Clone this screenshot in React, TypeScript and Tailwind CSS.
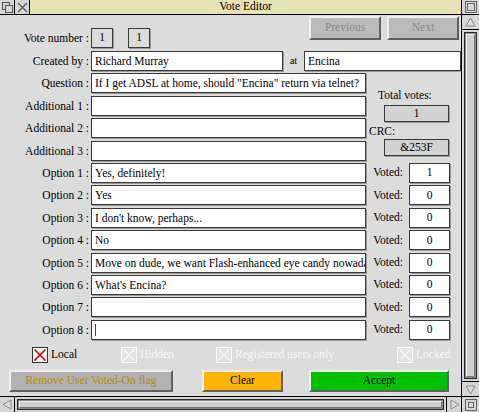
// Vote Editor — RISC OS style window with the poll form.
const FONT = "[font-family:'Liberation_Serif','Times_New_Roman',serif]"

const OPTIONS = [
  { text: 'Yes, definitely!', voted: 1 },
  { text: 'Yes', voted: 0 },
  { text: "I don't know, perhaps...", voted: 0 },
  { text: 'No', voted: 0 },
  { text: 'Move on dude, we want Flash-enhanced eye candy nowadays', voted: 0 },
  { text: "What's Encina?", voted: 0 },
  { text: '', voted: 0 },
  { text: '', voted: 0 },
]

function Label({ children }: { children: React.ReactNode }) {
  return <div className="w-[89px] shrink-0 whitespace-nowrap text-right leading-[20px]">{children}</div>
}

function Field({ w, children }: { w: string; children?: React.ReactNode }) {
  return (
    <div
      className={`${w} flex h-[20px] shrink-0 items-center overflow-hidden whitespace-nowrap border border-[#3a3a3a] bg-white pl-[3px] leading-[18px] shadow-[1px_1px_0_#9a9a9a]`}
    >
      {children}
    </div>
  )
}

function Tick({ on, label, w }: { on?: boolean; label: string; w: string }) {
  return (
    <div className={`${w} flex h-[16px] items-center gap-[3px]`}>
      <svg width="16" height="16" viewBox="0 0 16 16" className="shrink-0">
        <rect x="0.5" y="0.5" width="15" height="15" fill={on ? '#f2f2f2' : '#e2e2e2'} stroke={on ? '#333' : '#fafafa'} />
        <path d="M2.5 2.5 L13.5 13.5 M13.5 2.5 L2.5 13.5" stroke={on ? '#e00000' : '#f6f6f6'} strokeWidth={on ? 1.6 : 1.3} />
      </svg>
      <span className={on ? 'text-black' : 'text-[#f7f7f7]'}>{label}</span>
    </div>
  )
}

const bevel = 'border-2 border-t-[#f0f0f0] border-l-[#f0f0f0] border-b-[#606060] border-r-[#606060]'

function Arrow({ dir }: { dir: 'up' | 'down' | 'left' | 'right' }) {
  const d = {
    up: 'M2 10 L6.5 2 L11 10 Z',
    down: 'M2 3 L6.5 11 L11 3 Z',
    left: 'M10 2 L2 6.5 L10 11 Z',
    right: 'M3 2 L11 6.5 L3 11 Z',
  }[dir]
  return (
    <svg width="13" height="13" viewBox="0 0 13 13">
      <path d={d} fill="#dcdcdc" stroke="#8a8a8a" />
    </svg>
  )
}

export default function App() {
  return (
    <div className={`${FONT} flex h-[412px] w-[479px] flex-col overflow-hidden bg-[#dcdcdc] text-[11.5px] text-black`}>
      {/* title bar */}
      <div className="flex h-[15px] shrink-0 border-b border-black">
        <div className="flex w-[15px] items-center justify-center border-r border-black bg-[#d6d6d6]">
          <svg width="11" height="11" viewBox="0 0 11 11">
            <rect x="0.5" y="0.5" width="7" height="7" fill="none" stroke="#555" />
            <rect x="3.5" y="3.5" width="7" height="7" fill="#d6d6d6" stroke="#555" />
          </svg>
        </div>
        <div className="flex w-[15px] items-center justify-center border-r border-black bg-[#d6d6d6]">
          <svg width="11" height="11" viewBox="0 0 11 11">
            <path d="M1 1 L10 10 M10 1 L1 10" stroke="#555" strokeWidth="1.2" />
          </svg>
        </div>
        <div className="flex flex-1 items-center justify-center bg-[#e7e3b2] leading-none">Vote Editor</div>
        <div className="flex w-[18px] items-center justify-center border-l border-black bg-[#d6d6d6]">
          <svg width="12" height="12" viewBox="0 0 12 12">
            <rect x="0.5" y="0.5" width="11" height="11" fill="none" stroke="#666" />
            <rect x="2.5" y="2.5" width="7" height="7" fill="none" stroke="#666" />
          </svg>
        </div>
      </div>

      <div className="flex min-h-0 flex-1">
        {/* work area */}
        <div className="flex w-[461px] shrink-0 flex-col pt-px">
          <div className="flex h-[32px] items-start pr-[2px]">
            <div className="mt-[12px] flex items-center">
              <Label>Vote number :</Label>
              <div className="ml-[2px] flex h-[20px] w-[22px] items-center justify-center border border-[#3a3a3a] shadow-[1px_1px_0_#9a9a9a]">1</div>
              <div className="ml-[15px] flex h-[20px] w-[22px] items-center justify-center border border-[#3a3a3a] shadow-[1px_1px_0_#9a9a9a]">1</div>
            </div>
            <div className={`ml-auto flex h-[24px] w-[72px] items-center justify-center bg-[#bababa] text-[#8c8c8c] ${bevel}`}>Previous</div>
            <div className={`ml-[6px] flex h-[24px] w-[72px] items-center justify-center bg-[#bababa] text-[#8c8c8c] ${bevel}`}>Next</div>
          </div>

          <div className="mt-[3px] flex flex-col gap-[2.4px]">
            <div className="flex h-[20px] items-center">
              <Label>Created by :</Label>
              <div className="ml-[2px]">
                <Field w="w-[192px]">Richard Murray</Field>
              </div>
              <div className="w-[21px] text-center text-[10.5px]">at</div>
              <Field w="w-[157px]">Encina</Field>
            </div>

            <div className="flex">
              <div className="flex flex-col gap-[2.4px]">
                {[
                  ['Question :', 'If I get ADSL at home, should "Encina" return via telnet?'],
                  ['Additional 1 :', ''],
                  ['Additional 2 :', ''],
                  ['Additional 3 :', ''],
                ].map(([l, v]) => (
                  <div key={l} className="flex h-[20px] items-center">
                    <Label>{l}</Label>
                    <div className="ml-[2px]">
                      <Field w="w-[275px]">{v}</Field>
                    </div>
                  </div>
                ))}
              </div>
              <div className="flex flex-col">
                <div className="ml-[12px] mt-[15px] leading-[14px]">Total votes:</div>
                <div className="ml-[18px] mt-[3px] flex h-[17px] w-[65px] items-center justify-center border border-[#3a3a3a] bg-[#d2d2d2] shadow-[1px_1px_0_#9a9a9a]">1</div>
                <div className="ml-[3px] mt-[2px] leading-[14px]">CRC:</div>
                <div className="ml-[18px] mt-px flex h-[17px] w-[65px] items-center justify-center border border-[#3a3a3a] bg-[#d2d2d2] shadow-[1px_1px_0_#9a9a9a]">&amp;253F</div>
              </div>
            </div>

            {OPTIONS.map((o, i) => (
              <div key={i} className="flex h-[20px] items-center">
                <Label>Option {i + 1} :</Label>
                <div className="ml-[2px]">
                  <Field w="w-[275px]">
                    {i === 7 ? <span className="h-[12px] w-px bg-[#e00000]" /> : o.text}
                  </Field>
                </div>
                <div className="w-[37px] text-right">Voted:</div>
                <div className="ml-[6px] flex h-[20px] w-[41px] items-center justify-center border border-[#3a3a3a] bg-white shadow-[1px_1px_0_#9a9a9a]">
                  {o.voted}
                </div>
              </div>
            ))}
          </div>

          <div className="mt-[7px] flex pl-[32px]">
            <Tick on label="Local" w="w-[89px]" />
            <Tick label="Hidden" w="w-[95px]" />
            <Tick label="Registered users only" w="w-[181px]" />
            <Tick label="Locked" w="w-[60px]" />
          </div>

          <div className="mt-[7px] flex pl-[9px]">
            <div className={`flex h-[22px] w-[164px] items-center justify-center bg-[#b2b2b2] text-[#b88e00] ${bevel}`}>Remove User Voted-On flag</div>
            <div className={`ml-[29px] flex h-[22px] w-[81px] items-center justify-center bg-[#ffb400] ${bevel}`}>Clear</div>
            <div className={`ml-[26px] flex h-[22px] w-[140px] items-center justify-center bg-[#00c200] ${bevel}`}>Accept</div>
          </div>
        </div>

        {/* vertical scroll bar */}
        <div className="flex w-[18px] shrink-0 flex-col border-l border-black bg-[#d6d6d6]">
          <div className="flex h-[15px] items-center justify-center border-b border-black">
            <Arrow dir="up" />
          </div>
          <div className="mx-[2px] my-[2px] flex flex-1 flex-col border border-[#2a2a2a] bg-[#8a8a8a] p-px">
            <div className="flex-1 border border-t-[#efefef] border-l-[#efefef] border-b-[#777] border-r-[#777] bg-[#cfcfcf]" />
          </div>
          <div className="flex h-[15px] items-center justify-center border-t border-black">
            <Arrow dir="down" />
          </div>
        </div>
      </div>

      {/* horizontal scroll bar */}
      <div className="flex h-[16px] shrink-0 border-t border-black bg-[#d6d6d6]">
        <div className="flex w-[15px] items-center justify-center border-r border-black">
          <Arrow dir="left" />
        </div>
        <div className="mx-[2px] my-[2px] flex flex-1 border border-[#2a2a2a] bg-[#8a8a8a] p-px">
          <div className="flex-1 border border-t-[#efefef] border-l-[#efefef] border-b-[#777] border-r-[#777] bg-[#cfcfcf]" />
        </div>
        <div className="flex w-[15px] items-center justify-center border-l border-black">
          <Arrow dir="right" />
        </div>
        <div className="flex w-[18px] items-center justify-center border-l border-black">
          <svg width="12" height="12" viewBox="0 0 12 12">
            <rect x="0.5" y="0.5" width="11" height="11" fill="none" stroke="#666" />
            <rect x="3.5" y="3.5" width="5" height="5" fill="none" stroke="#666" />
          </svg>
        </div>
      </div>
    </div>
  )
}
